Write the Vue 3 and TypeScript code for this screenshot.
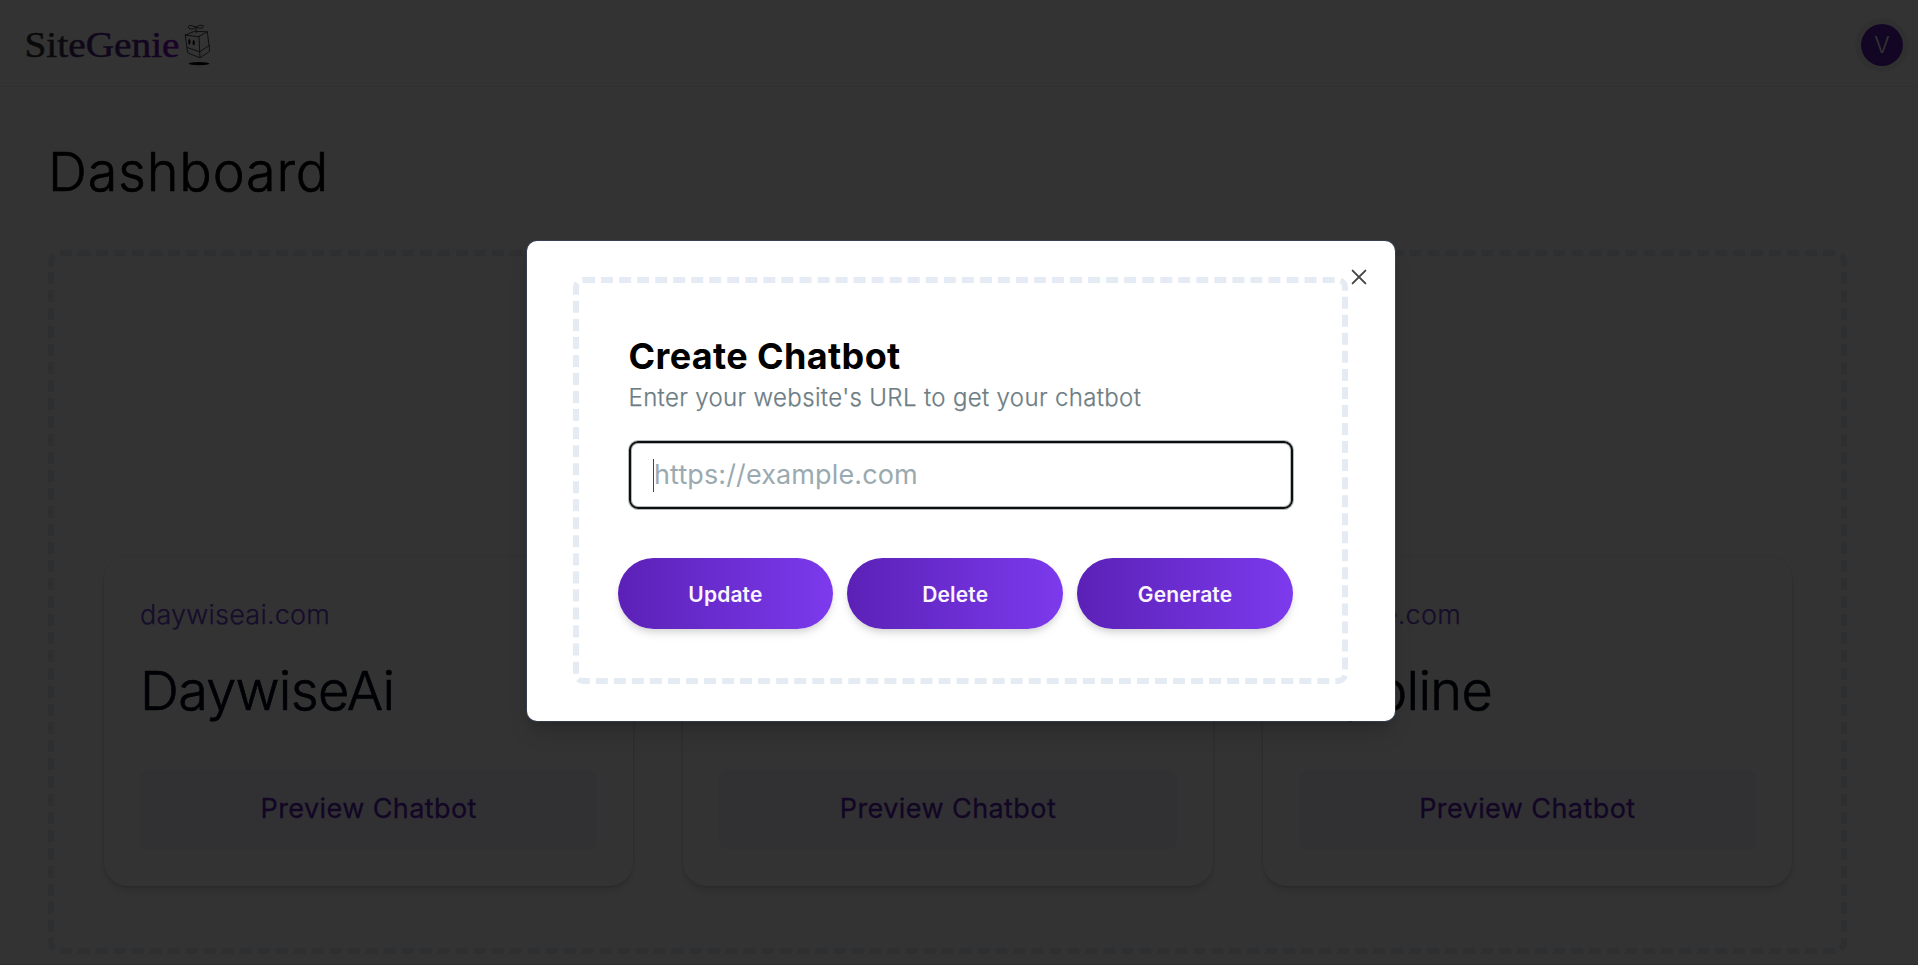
<script setup lang="ts">
import { ref } from 'vue'

interface Bot {
  id: number
  domain?: string
  name?: string
}

const bots: Bot[] = [
  { id: 1, domain: 'daywiseai.com', name: 'DaywiseAi' },
  { id: 2 },
  { id: 3, domain: 'zipoline.com', name: 'Zipoline' },
]

const actions: string[] = ['Update', 'Delete', 'Generate']
const open = ref(true)
const url = ref('')
</script>

<template>
  <div class="screen">
    <header class="header">
      <svg class="logo" width="190" height="60" viewBox="0 0 190 60" role="img" aria-label="SiteGenie">
        <defs>
          <linearGradient id="logoFill" x1="0" x2="1" y1="0" y2="0">
            <stop offset="0" stop-color="#303030" />
            <stop offset="0.15" stop-color="#343238" />
            <stop offset="0.42" stop-color="#522488" />
            <stop offset="0.7" stop-color="#522488" />
            <stop offset="1" stop-color="#8a00d0" />
          </linearGradient>
        </defs>
        <text class="logo-text" x="-0.5" y="42" textLength="155" lengthAdjust="spacingAndGlyphs">SiteGenie</text>
        <g fill="none" stroke="#333" stroke-width="0.9" stroke-linejoin="round" stroke-linecap="round">
          <path d="M160.3 20 L169.5 16.3 L182.3 16.8 L174 21.5 Z" />
          <path d="M160.3 20 L162.5 37 Q162.8 38 164 38.5 L175 42.7 L183.5 37.2 Q184.7 36.2 184.6 35 L182.3 16.8" />
          <path d="M174 21.5 L175 42.7" />
          <path d="M162 32.5 L174.6 36.8 L184.4 30.3" />
          <path d="M171.3 17.8 L171 12.6 Q167 15.2 164 13.6 Q162 11.4 164.6 10.4 Q168 10.8 171 12 Q175 9.4 178 10.4 Q179.5 12.2 177 13.2 Q174 13.4 171 12.2" />
        </g>
        <ellipse cx="164.4" cy="26.7" rx="1.1" ry="2.7" fill="#000" />
        <ellipse cx="168.7" cy="27.7" rx="1.1" ry="2.6" fill="#000" />
        <ellipse cx="174" cy="48.7" rx="10.3" ry="1.6" fill="#000" />
      </svg>
      <div class="avatar">V</div>
    </header>

    <main class="main">
      <h1 class="title">Dashboard</h1>
      <section class="board">
        <article v-for="bot in bots" :key="bot.id" class="card">
          <span v-if="bot.domain" class="domain">{{ bot.domain }}</span>
          <h2 v-if="bot.name" class="name">{{ bot.name }}</h2>
          <button class="preview" type="button">Preview Chatbot</button>
        </article>
      </section>
    </main>
    <footer class="footer"></footer>

    <div v-if="open" class="overlay">
      <div class="modal">
        <button class="close" type="button" aria-label="Close" @click="open = false">
          <svg width="16" height="16" viewBox="0 0 16 16">
            <path d="M1.6 1.6 L14.4 14.4 M14.4 1.6 L1.6 14.4" stroke="#444" stroke-width="1.9" stroke-linecap="round" />
          </svg>
        </button>
        <div class="form">
          <h3 class="form-title">Create Chatbot</h3>
          <p class="form-sub">Enter your website's URL to get your chatbot</p>
          <div class="field">
            <span class="caret"></span>
            <input v-model="url" class="input" type="text" placeholder="https://example.com" />
          </div>
          <div class="actions">
            <button v-for="a in actions" :key="a" class="action" type="button">{{ a }}</button>
          </div>
        </div>
      </div>
    </div>
  </div>
</template>

<style>
body {
  margin: 0;
  overflow: hidden;
}
</style>

<style scoped>
.screen {
  position: relative;
  display: flex;
  flex-direction: column;
  box-sizing: border-box;
  width: 100%;
  height: 965px;
  overflow: hidden;
  background: #fff;
  color: #000;
  font-family: Inter, sans-serif;
}
h1, h2, h3, p {
  margin: 0;
}
button {
  border: 0;
  padding: 0;
  font-family: inherit;
}
.header {
  display: flex;
  align-items: center;
  justify-content: space-between;
  box-sizing: border-box;
  height: 87px;
  padding: 3px 15px 0 25px;
  border-bottom: 1px solid #e8e8ea;
}
.logo {
  overflow: visible;
}
.logo-text {
  fill: url(#logoFill);
  stroke: url(#logoFill);
  stroke-width: 0.5px;
  font-family: "Liberation Serif", serif;
  font-size: 36px;
}
.avatar {
  width: 42px;
  height: 42px;
  border-radius: 50%;
  box-shadow: 0 0 0 6px #eef1f5;
  background: #5b21b6;
  color: #fff;
  font-size: 23px;
  font-weight: 300;
  line-height: 42px;
  text-align: center;
}
.main {
  padding: 53px 71px 0 48px;
}
.title {
  margin-bottom: 46px;
  font-size: 54px;
  font-weight: 300;
  line-height: 64px;
  letter-spacing: 0.8px;
  -webkit-text-stroke: 0.7px currentColor;
}
.board {
  display: grid;
  grid-template-columns: repeat(3, 1fr);
  gap: 50px;
  box-sizing: border-box;
  height: 704px;
  padding: 300px 49px 62px 50px;
  border: 6px dashed #e4ebf3;
  border-radius: 12px;
}
.card {
  display: flex;
  flex-direction: column;
  box-sizing: border-box;
  padding: 39px 36px 36px;
  border-radius: 24px;
  box-shadow: 0 0 0 1px rgba(0, 0, 0, 0.06), 0 6px 9px -1px rgba(0, 0, 0, 0.1), 0 3px 6px -2px rgba(0, 0, 0, 0.1);
  background: #fff;
}
.domain {
  margin-bottom: 24px;
  color: #7040d8;
  font-size: 27px;
  font-weight: 300;
  line-height: 40px;
  letter-spacing: 0.22px;
  -webkit-text-stroke: 0.25px currentColor;
}
.name {
  color: #020617;
  font-size: 54px;
  font-weight: 300;
  line-height: 64px;
  letter-spacing: -0.7px;
  -webkit-text-stroke: 0.7px currentColor;
}
.preview {
  height: 81px;
  margin-top: auto;
  padding-bottom: 2px;
  border-radius: 9px;
  background: #f5f3ff;
  color: #5b21b6;
  font-size: 27px;
  font-weight: 400;
  letter-spacing: 0.42px;
  -webkit-text-stroke: 0.3px currentColor;
}
.footer {
  height: 1px;
  margin-top: auto;
  background: #eedde2;
}
.overlay {
  position: absolute;
  inset: 0;
  display: flex;
  align-items: flex-start;
  justify-content: center;
  padding: 241px 0 0 4px;
  background: rgba(0, 0, 0, 0.8);
}
.modal {
  position: relative;
  box-sizing: border-box;
  width: 868px;
  height: 480px;
  padding: 36px 47px 37px 46px;
  border-radius: 10px;
  box-shadow: 0 0 0 1px rgba(60, 75, 105, 0.55), 0 15px 22px -4px rgba(0, 0, 0, 0.15), 0 6px 9px -4px rgba(0, 0, 0, 0.15);
  background: #fff;
}
.close {
  position: absolute;
  top: 28px;
  right: 28px;
  width: 16px;
  height: 16px;
  background: none;
}
.close svg {
  display: block;
}
.form {
  box-sizing: border-box;
  height: 407px;
  padding: 53px 49px 0 50px;
  border: 6px dashed #e4ebf3;
  border-radius: 10px;
}
.form-title {
  margin-left: -0.5px;
  font-size: 36px;
  font-weight: 700;
  line-height: 40px;
  letter-spacing: 0.36px;
}
.form-sub {
  margin: 6px 0 0 -0.5px;
  color: #6d7d84;
  font-size: 24px;
  font-weight: 300;
  line-height: 32px;
  letter-spacing: 0.35px;
  -webkit-text-stroke: 0.25px currentColor;
}
.field {
  display: flex;
  align-items: center;
  box-sizing: border-box;
  height: 68px;
  margin-top: 27px;
  padding: 0 22px;
  border: 2px solid #0b0f10;
  border-radius: 9px;
  box-shadow: 0 0 0 1px rgba(10, 20, 20, 0.3), inset 0 0 0 1px rgba(10, 20, 20, 0.3);
}
.caret {
  flex: none;
  width: 1px;
  height: 33px;
  margin-right: -1px;
  background: #444;
}
.input {
  width: 100%;
  padding: 0 0 2px 1px;
  border: 0;
  outline: 0;
  background: none;
  font-family: inherit;
  font-size: 27px;
  letter-spacing: 0.12px;
}
.input::placeholder {
  color: #9aaab0;
  opacity: 1;
}
.actions {
  display: grid;
  grid-template-columns: repeat(3, 1fr);
  gap: 14px;
  margin: 49px 0 0 -11.5px;
}
.action {
  height: 71px;
  padding-top: 2px;
  border-radius: 36px;
  box-shadow: 0 6px 9px -1px rgba(0, 0, 0, 0.1), 0 3px 6px -2px rgba(0, 0, 0, 0.1);
  background: linear-gradient(90deg, #5b21b6, #7c3aed);
  color: #faf5ff;
  font-size: 21px;
  font-weight: 600;
  letter-spacing: 0.15px;
}
</style>
